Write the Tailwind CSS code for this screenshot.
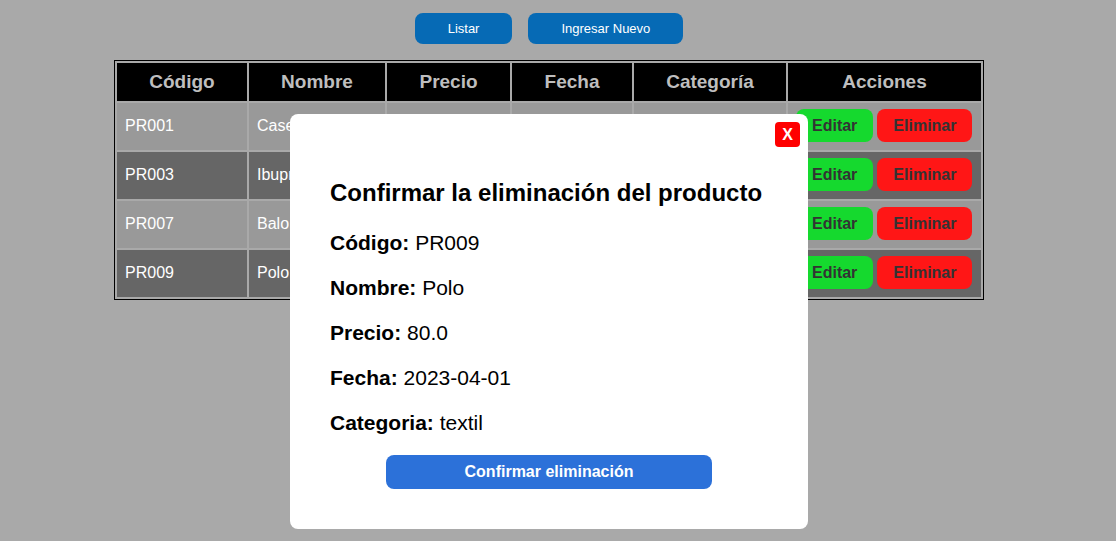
<!DOCTYPE html>
<html lang="es">
<head>
<meta charset="utf-8">
<title>Productos</title>
<script src="https://cdn.jsdelivr.net/npm/@tailwindcss/browser@4"></script>
</head>
<body class="min-h-screen bg-[#a9a9a9] pr-[18px] font-['Liberation_Sans',Arial,sans-serif] text-base text-black">
<nav class="flex justify-center gap-4 pt-[13px]">
  <button type="button" class="h-[31px] rounded-lg bg-[#066ab5] px-[33px] text-[13px] text-white">Listar</button>
  <button type="button" class="h-[31px] rounded-lg bg-[#066ab5] px-[33px] text-[13px] text-white">Ingresar Nuevo</button>
</nav>
<main class="mt-4 flex justify-center">
  <table class="border-separate border-spacing-[2px] border border-black text-white">
    <thead class="bg-black text-[19px] leading-[22px] text-[#bebebe]">
      <tr>
        <th class="w-[130px] min-w-[130px] py-2">Código</th>
        <th class="w-[136px] min-w-[136px] py-2">Nombre</th>
        <th class="w-[123px] min-w-[123px] py-2">Precio</th>
        <th class="w-[120px] min-w-[120px] py-2">Fecha</th>
        <th class="w-[152px] min-w-[152px] py-2">Categoría</th>
        <th class="w-[193px] min-w-[193px] py-2">Acciones</th>
      </tr>
    </thead>
    <tbody>
      <tr class="h-[47px] bg-[#999999]">
        <td class="px-2 pb-0.5">PR001</td><td class="px-2 pb-0.5">Case</td><td></td><td></td><td></td>
        <td class="px-2 pb-0.5"><div class="flex gap-1"><button type="button" class="h-[33px] rounded-lg bg-[#15d92e] px-4 font-bold text-[#333333]">Editar</button><button type="button" class="h-[33px] rounded-lg bg-[#ff1616] px-4 font-bold text-[#333333]">Eliminar</button></div></td>
      </tr>
      <tr class="h-[47px] bg-[#666666]">
        <td class="px-2 pb-0.5">PR003</td><td class="px-2 pb-0.5">Ibupr</td><td></td><td></td><td></td>
        <td class="px-2 pb-0.5"><div class="flex gap-1"><button type="button" class="h-[33px] rounded-lg bg-[#15d92e] px-4 font-bold text-[#333333]">Editar</button><button type="button" class="h-[33px] rounded-lg bg-[#ff1616] px-4 font-bold text-[#333333]">Eliminar</button></div></td>
      </tr>
      <tr class="h-[47px] bg-[#999999]">
        <td class="px-2 pb-0.5">PR007</td><td class="px-2 pb-0.5">Balo</td><td></td><td></td><td></td>
        <td class="px-2 pb-0.5"><div class="flex gap-1"><button type="button" class="h-[33px] rounded-lg bg-[#15d92e] px-4 font-bold text-[#333333]">Editar</button><button type="button" class="h-[33px] rounded-lg bg-[#ff1616] px-4 font-bold text-[#333333]">Eliminar</button></div></td>
      </tr>
      <tr class="h-[47px] bg-[#666666]">
        <td class="px-2 pb-0.5">PR009</td><td class="px-2 pb-0.5">Polo</td><td></td><td></td><td></td>
        <td class="px-2 pb-0.5"><div class="flex gap-1"><button type="button" class="h-[33px] rounded-lg bg-[#15d92e] px-4 font-bold text-[#333333]">Editar</button><button type="button" class="h-[33px] rounded-lg bg-[#ff1616] px-4 font-bold text-[#333333]">Eliminar</button></div></td>
      </tr>
    </tbody>
  </table>
</main>
<div class="absolute inset-x-0 top-[114px] flex justify-center pr-[18px]">
  <section role="dialog" aria-modal="true" aria-labelledby="titulo" class="relative w-[518px] max-w-full rounded-lg bg-white px-10 pt-[65px] pb-10">
    <button type="button" aria-label="X" class="absolute top-2 right-2 size-[25px] rounded-sm bg-[#ff0000] font-bold text-white">X</button>
    <h2 id="titulo" class="text-2xl leading-7 font-bold">Confirmar la eliminación del producto</h2>
    <div class="mt-6 flex flex-col gap-[21px] text-[21px] leading-6">
      <p><strong>Código:</strong> PR009</p>
      <p><strong>Nombre:</strong> Polo</p>
      <p><strong>Precio:</strong> 80.0</p>
      <p><strong>Fecha:</strong> 2023-04-01</p>
      <p><strong>Categoria:</strong> textil</p>
    </div>
    <button type="button" class="mx-auto mt-5 block h-[34px] w-[326px] max-w-full rounded-lg bg-[#2c71d9] font-bold text-white">Confirmar eliminación</button>
  </section>
</div>
</body>
</html>
